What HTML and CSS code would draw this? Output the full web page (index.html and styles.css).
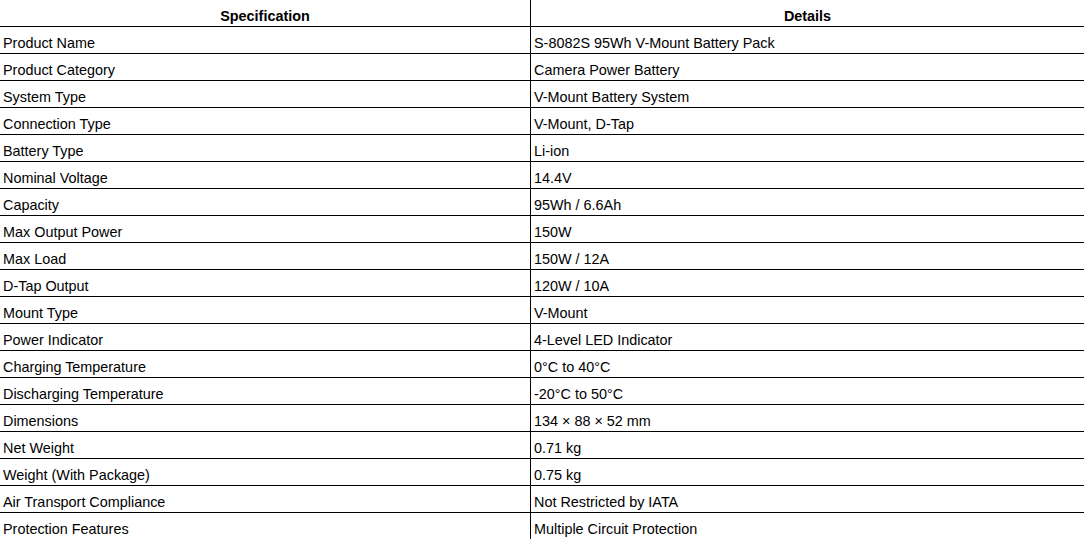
FILE: index.html
```html
<!DOCTYPE html>
<html>
<head>
<meta charset="utf-8">
<link rel="stylesheet" href="styles.css">
</head>
<body>
<table class="spec">
  <thead>
    <tr><th class="c1">Specification</th><th class="c2">Details</th></tr>
  </thead>
  <tbody>
    <tr><td class="c1">Product Name</td><td class="c2">S-8082S 95Wh V-Mount Battery Pack</td></tr>
    <tr><td class="c1">Product Category</td><td class="c2">Camera Power Battery</td></tr>
    <tr><td class="c1">System Type</td><td class="c2">V-Mount Battery System</td></tr>
    <tr><td class="c1">Connection Type</td><td class="c2">V-Mount, D-Tap</td></tr>
    <tr><td class="c1">Battery Type</td><td class="c2">Li-ion</td></tr>
    <tr><td class="c1">Nominal Voltage</td><td class="c2">14.4V</td></tr>
    <tr><td class="c1">Capacity</td><td class="c2">95Wh / 6.6Ah</td></tr>
    <tr><td class="c1">Max Output Power</td><td class="c2">150W</td></tr>
    <tr><td class="c1">Max Load</td><td class="c2">150W / 12A</td></tr>
    <tr><td class="c1">D-Tap Output</td><td class="c2">120W / 10A</td></tr>
    <tr><td class="c1">Mount Type</td><td class="c2">V-Mount</td></tr>
    <tr><td class="c1">Power Indicator</td><td class="c2">4-Level LED Indicator</td></tr>
    <tr><td class="c1">Charging Temperature</td><td class="c2">0°C to 40°C</td></tr>
    <tr><td class="c1">Discharging Temperature</td><td class="c2">-20°C to 50°C</td></tr>
    <tr><td class="c1">Dimensions</td><td class="c2">134 × 88 × 52 mm</td></tr>
    <tr><td class="c1">Net Weight</td><td class="c2">0.71 kg</td></tr>
    <tr><td class="c1">Weight (With Package)</td><td class="c2">0.75 kg</td></tr>
    <tr><td class="c1">Air Transport Compliance</td><td class="c2">Not Restricted by IATA</td></tr>
    <tr><td class="c1">Protection Features</td><td class="c2">Multiple Circuit Protection</td></tr>
  </tbody>
</table>
</body>
</html>
```
FILE: styles.css
```css
html, body {
  margin: 0;
  padding: 0;
  background: #fff;
}
body {
  font-family: "Liberation Sans", Arial, sans-serif;
  font-size: 14.4px;
  color: #000;
}
.spec {
  width: 1084px;
  border-collapse: separate;
  border-spacing: 0;
  table-layout: fixed;
}
.spec th, .spec td {
  padding: 8px 3px 2px;
  line-height: 16px;
  border-bottom: 1px solid #000;
  text-align: left;
  font-weight: normal;
  white-space: nowrap;
}
.spec th {
  font-weight: bold;
  text-align: center;
}
.spec .c1 {
  width: 524px;
  border-right: 1px solid #000;
}
```
